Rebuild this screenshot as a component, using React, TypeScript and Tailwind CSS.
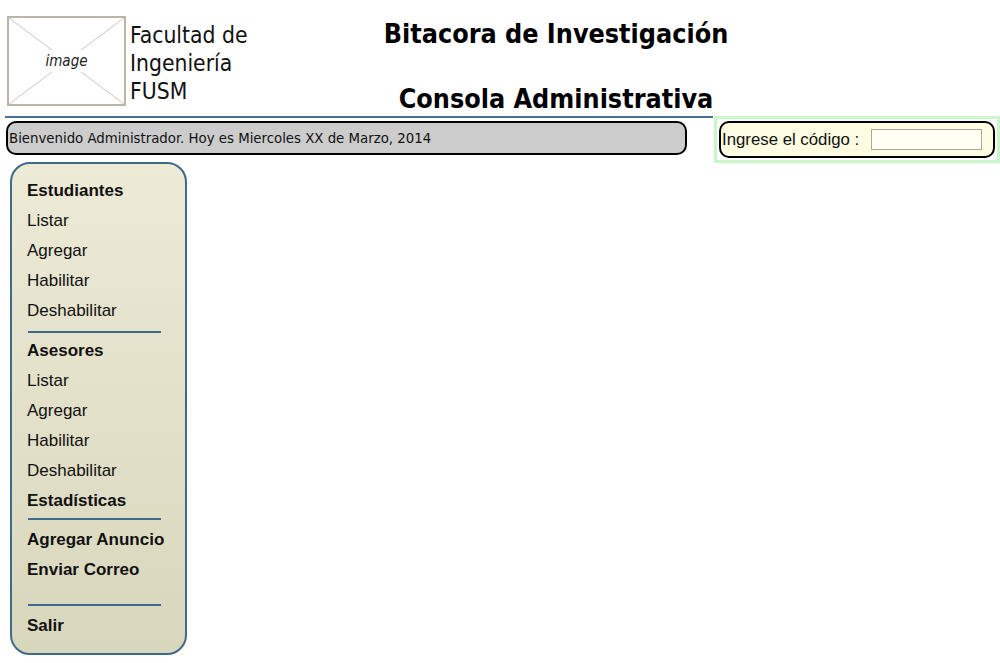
function MenuItem({ label, bold }: { label: string; bold?: boolean }) {
  return (
    <div className={`h-[30px] leading-[30px] pl-[15px] text-[17px] text-[#111] ${bold ? 'font-bold' : ''}`}>
      {label}
    </div>
  );
}

function Divider({ height, top }: { height: string; top: string }) {
  return (
    <div className={`${height} ${top}`}>
      <div className="ml-[16px] w-[133px] h-[2px] bg-[#3f6a8f]" />
    </div>
  );
}

export default function App() {
  return (
    <div className="w-[1000px] h-[663px] bg-white overflow-hidden font-['DejaVu_Sans_Condensed',sans-serif]">
      {/* Cabecera */}
      <div className="flex h-[116px]">
        <div className="flex w-[356px] pt-[16px] pl-[7px]">
          <div className="relative w-[119px] h-[90px] border-2 border-[#b9b5a9] flex items-center justify-center">
            <svg className="absolute inset-0" width="115" height="86" viewBox="0 0 115 86">
              <line x1="0" y1="0" x2="115" y2="86" stroke="#c9c5b9" strokeWidth="1" />
              <line x1="115" y1="0" x2="0" y2="86" stroke="#c9c5b9" strokeWidth="1" />
            </svg>
            <span className="relative italic text-[15px] text-[#222] bg-white px-[1px]">image</span>
          </div>
          <div className="ml-[4px] mt-[5px] text-[22.7px] leading-[28px] text-[#111]">
            <div>Facultad de</div>
            <div>Ingeniería</div>
            <div>FUSM</div>
          </div>
        </div>
        <div className="w-[400px] flex flex-col items-center pt-[18px] font-bold text-[26.7px] text-black">
          <div className="leading-[32px]">Bitacora de Investigación</div>
          <div className="leading-[32px] mt-[33px]">Consola Administrativa</div>
        </div>
      </div>

      {/* Barra de bienvenida y código */}
      <div className="flex">
        <div className="w-[714px]">
          <div className="ml-[5px] w-[708px] h-[2px] bg-[#4a6f96]" />
          <div className="mt-[3px] ml-[6px] w-[681px] h-[34px] bg-[#cccccc] border-2 border-black rounded-[10px] flex items-center pl-[1px] text-[14.8px] text-[#111]">
            Bienvenido Administrador. Hoy es Miercoles XX de Marzo, 2014
          </div>
        </div>
        <div className="w-[286px] h-[47px] border-[3px] border-[#c8f7c8] p-[2px]">
          <div className="h-full bg-[#fdfde2] border-2 border-black rounded-[10px] flex items-center pl-[1px] font-['Liberation_Sans',sans-serif] text-[16.8px] text-[#111]">
            <span>Ingrese el código :</span>
            <input className="ml-[12px] w-[111px] h-[21px] bg-[#fffff4] border border-[#aaa99a] outline-none" />
          </div>
        </div>
      </div>

      {/* Menú lateral */}
      <div className="mt-[-1px] ml-[10px] w-[177px] h-[493px] border-2 border-[#3f6a8c] rounded-[20px] bg-gradient-to-b from-[#edead6] to-[#d8d7bc] pt-[12px] font-['Liberation_Sans',sans-serif]">
        <MenuItem label="Estudiantes" bold />
        <MenuItem label="Listar" />
        <MenuItem label="Agregar" />
        <MenuItem label="Habilitar" />
        <MenuItem label="Deshabilitar" />
        <Divider height="h-[10px]" top="pt-[5px]" />
        <MenuItem label="Asesores" bold />
        <MenuItem label="Listar" />
        <MenuItem label="Agregar" />
        <MenuItem label="Habilitar" />
        <MenuItem label="Deshabilitar" />
        <MenuItem label="Estadísticas" bold />
        <Divider height="h-[9px]" top="pt-[2px]" />
        <MenuItem label="Agregar Anuncio" bold />
        <MenuItem label="Enviar Correo" bold />
        <Divider height="h-[26px]" top="pt-[19px]" />
        <MenuItem label="Salir" bold />
      </div>
    </div>
  );
}
